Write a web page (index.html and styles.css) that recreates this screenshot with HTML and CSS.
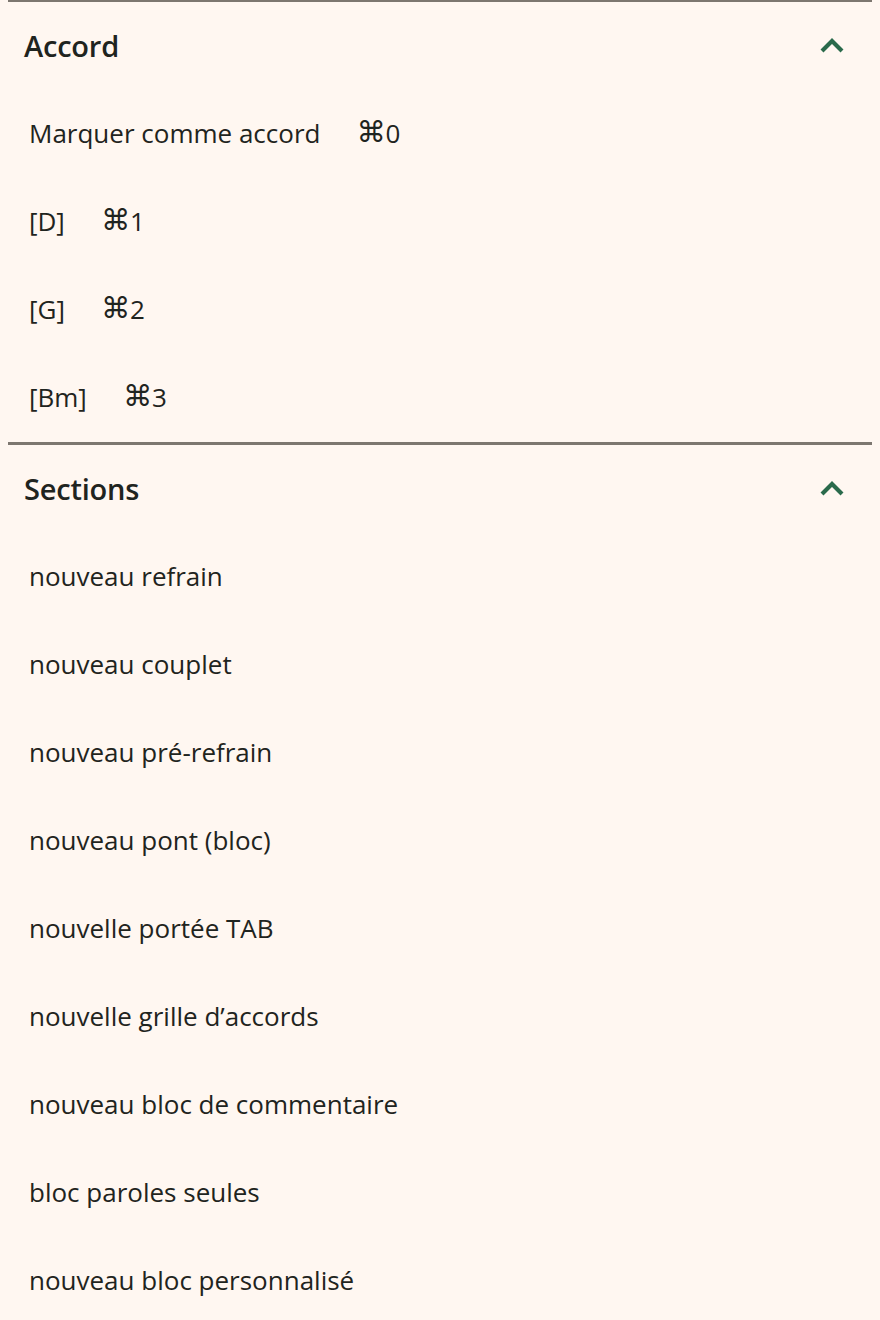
FILE: index.html
```html
<!DOCTYPE html>
<html lang="fr">
<head>
<meta charset="utf-8">
<title>Insertion</title>
<link rel="stylesheet" href="styles.css">
</head>
<body>
<section class="panel">
  <div class="panel-head">
    <h2 class="panel-title">Accord</h2>
    <svg class="chevron" width="28" height="20" viewBox="0 0 28 20" aria-hidden="true"><path d="M4 15 L14 5 L24 15" /></svg>
  </div>
  <ul class="items">
    <li class="item"><span>Marquer comme accord</span><span class="kbd"><span class="cmd">⌘</span>0</span></li>
    <li class="item"><span>[D]</span><span class="kbd"><span class="cmd">⌘</span>1</span></li>
    <li class="item"><span>[G]</span><span class="kbd"><span class="cmd">⌘</span>2</span></li>
    <li class="item"><span>[Bm]</span><span class="kbd"><span class="cmd">⌘</span>3</span></li>
  </ul>
</section>
<section class="panel">
  <div class="panel-head">
    <h2 class="panel-title">Sections</h2>
    <svg class="chevron" width="28" height="20" viewBox="0 0 28 20" aria-hidden="true"><path d="M4 15 L14 5 L24 15" /></svg>
  </div>
  <ul class="items">
    <li class="item"><span>nouveau refrain</span></li>
    <li class="item"><span>nouveau couplet</span></li>
    <li class="item"><span>nouveau pré-refrain</span></li>
    <li class="item"><span>nouveau pont (bloc)</span></li>
    <li class="item"><span>nouvelle portée TAB</span></li>
    <li class="item"><span>nouvelle grille d’accords</span></li>
    <li class="item"><span>nouveau bloc de commentaire</span></li>
    <li class="item"><span>bloc paroles seules</span></li>
    <li class="item"><span>nouveau bloc personnalisé</span></li>
  </ul>
</section>
</body>
</html>
```

FILE: styles.css
```css
html {
  background: #fff7f1;
}
body {
  margin: -1px 8px 0;
  font-family: "Open Sans", "DejaVu Sans", sans-serif;
  color: #1f2420;
}
.panel {
  border-top: 3px solid #7d7770;
}
.panel-head {
  box-sizing: border-box;
  height: 88px;
  display: flex;
  align-items: center;
  justify-content: space-between;
  padding: 0 26px 2px 16px;
}
.panel-title {
  margin: 0;
  font-size: 29px;
  font-weight: 600;
  letter-spacing: -0.2px;
}
.chevron {
  margin-top: 2px;
}
.chevron path {
  fill: none;
  stroke: #2a6a4b;
  stroke-width: 4.2;
}
.items {
  list-style: none;
  margin: 0;
  padding: 0;
}
.item {
  box-sizing: border-box;
  height: 88px;
  display: flex;
  align-items: center;
  gap: 36px;
  padding: 0 0 3px 21px;
  font-size: 26px;
}
.kbd {
  display: flex;
  align-items: center;
}
.cmd {
  font-family: "DejaVu Sans", sans-serif;
  font-size: 29px;
  line-height: 1;
}
```
